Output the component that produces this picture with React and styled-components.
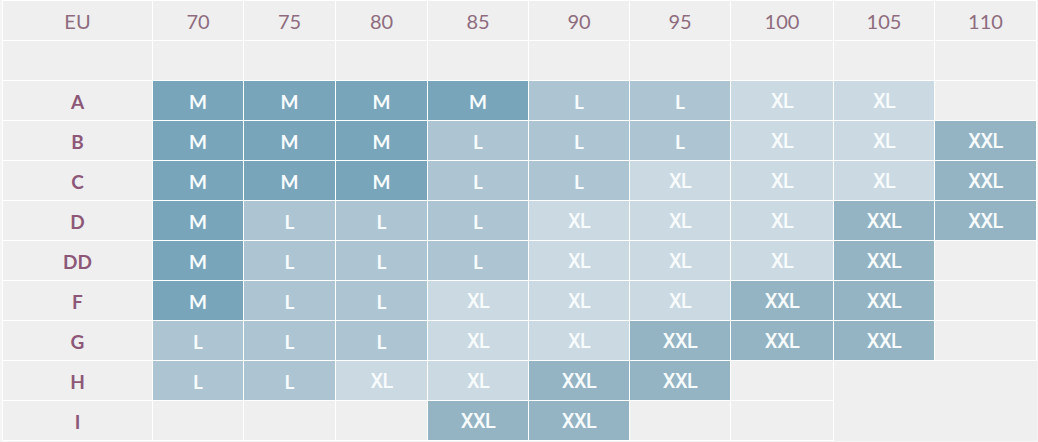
import React from 'react';
import styled, { createGlobalStyle } from 'styled-components';

const Global = createGlobalStyle`
  body {
    margin: 0;
    background: #f4f4f4;
    font-family: Lato, "Open Sans", sans-serif;
  }
`;

const Wrap = styled.div`
  padding-left: 2px;
`;

const Grid = styled.div`
  display: grid;
  grid-template-columns: 149px 90px 91px 91px 100px 100px 100px 102px 100px 101px;
  grid-auto-rows: 39px;
  gap: 1px;
  padding: 1px;
  width: max-content;
  background: #ffffff;
`;

const COLORS = {
  M: '#78a5ba',
  L: '#adc4d2',
  XL: '#cbd9e2',
  XXL: '#94b4c4',
};

// the X sizes are set in an Arial-like face in the original chart
const isX = (s) => s && s.startsWith('X');

const Cell = styled.div`
  display: flex;
  align-items: center;
  justify-content: center;
  padding-top: 1px;
  background: ${(p) => COLORS[p.$size] || '#efefef'};
  color: #f7fbfc;
  font-family: ${(p) => (isX(p.$size) ? 'Roboto, Arial, sans-serif' : 'Lato, sans-serif')};
  font-size: ${(p) => (isX(p.$size) ? '20px' : '19px')};
  font-weight: ${(p) => (isX(p.$size) ? 500 : 700)};
  letter-spacing: ${(p) => (isX(p.$size) ? '-0.6px' : '0')};
`;

const HeadCell = styled(Cell)`
  color: #8e6c7e;
  font-family: Lato, sans-serif;
  font-weight: 400;
  font-size: 20px;
`;

const RowLabel = styled(Cell)`
  color: #8d5878;
  font-family: Lato, sans-serif;
  font-size: 19px;
  font-weight: 700;
`;

const Filler = styled.div`
  grid-column: span 2;
  grid-row: span 2;
  background: #efefef;
  margin: 0 -1px -1px 0;
`;

const cols = ['70', '75', '80', '85', '90', '95', '100', '105', '110'];

const rows = [
  ['A', ['M', 'M', 'M', 'M', 'L', 'L', 'XL', 'XL', '']],
  ['B', ['M', 'M', 'M', 'L', 'L', 'L', 'XL', 'XL', 'XXL']],
  ['C', ['M', 'M', 'M', 'L', 'L', 'XL', 'XL', 'XL', 'XXL']],
  ['D', ['M', 'L', 'L', 'L', 'XL', 'XL', 'XL', 'XXL', 'XXL']],
  ['DD', ['M', 'L', 'L', 'L', 'XL', 'XL', 'XL', 'XXL', '']],
  ['F', ['M', 'L', 'L', 'XL', 'XL', 'XL', 'XXL', 'XXL', '']],
  ['G', ['L', 'L', 'L', 'XL', 'XL', 'XXL', 'XXL', 'XXL', '']],
  ['H', ['L', 'L', 'XL', 'XL', 'XXL', 'XXL', ''], true],
  ['I', ['', '', '', 'XXL', 'XXL', '', '']],
];

const App = () => {
  return (
    <Wrap>
      <Global />
      <Grid>
        <HeadCell>EU</HeadCell>
        {cols.map((c) => (
          <HeadCell key={c}>{c}</HeadCell>
        ))}
        <Cell />
        {cols.map((c) => (
          <Cell key={'b' + c} />
        ))}
        {rows.map(([label, sizes, filler]) => (
          <React.Fragment key={label}>
            <RowLabel>{label}</RowLabel>
            {sizes.map((s, i) => (
              <Cell key={i} $size={s}>{s}</Cell>
            ))}
            {filler && <Filler />}
          </React.Fragment>
        ))}
      </Grid>
    </Wrap>
  );
};

export default App;
